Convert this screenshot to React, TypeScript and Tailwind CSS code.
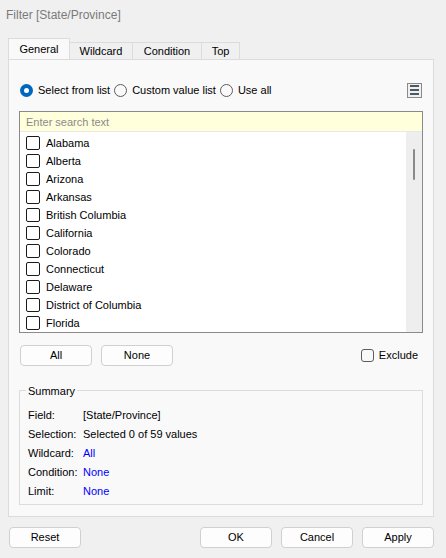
import React from "react"

const states = [
  "Alabama",
  "Alberta",
  "Arizona",
  "Arkansas",
  "British Columbia",
  "California",
  "Colorado",
  "Connecticut",
  "Delaware",
  "District of Columbia",
  "Florida",
]

function Radio({ checked, label }: { checked?: boolean; label: string }) {
  return (
    <label className="flex items-center gap-[5px]">
      {checked ? (
        <span className="w-[13px] h-[13px] rounded-full bg-[#0067c0] flex items-center justify-center">
          <span className="w-[5px] h-[5px] rounded-full bg-white" />
        </span>
      ) : (
        <span className="w-[13px] h-[13px] rounded-full border border-[#5d5d5d] bg-[#f9f9f9]" />
      )}
      <span>{label}</span>
    </label>
  )
}

function Btn({ children, className = "" }: { children: React.ReactNode; className?: string }) {
  return (
    <button
      className={
        "h-[21px] w-[72px] rounded-[4px] border border-[#d0d0d0] bg-[#fdfdfd] text-[11px] text-black leading-none " +
        className
      }
    >
      {children}
    </button>
  )
}

export default function App() {
  return (
    <div
      className="w-[446px] h-[558px] bg-[#f0f0f0] text-[11px] text-[#1a1a1a] flex flex-col"
      style={{ fontFamily: '"Segoe UI", "Liberation Sans", sans-serif' }}
    >
      <div className="h-[39px] pl-[6px] pt-[6px] text-[12px] text-[#7a7a7a]">Filter [State/Province]</div>

      {/* tabs */}
      <div className="flex items-end pl-[8px] h-[20px] relative z-10">
        <div className="h-[21px] w-[62px] bg-[#f9f9f9] border border-b-0 border-[#dcdcdc] flex items-center justify-center text-black">
          General
        </div>
        <div className="h-[17px] w-[63px] border border-l-0 border-b-0 border-[#dcdcdc] flex items-center justify-center text-black">
          Wildcard
        </div>
        <div className="h-[17px] w-[69px] border border-l-0 border-b-0 border-[#dcdcdc] flex items-center justify-center text-black">
          Condition
        </div>
        <div className="h-[17px] w-[38px] border border-l-0 border-b-0 border-[#dcdcdc] flex items-center justify-center text-black">
          Top
        </div>
      </div>

      {/* panel */}
      <div className="ml-[8px] w-[426px] h-[458px] border border-[#dcdcdc] bg-[#f9f9f9] px-[10px] pt-[22px] flex flex-col">
        <div className="flex items-center justify-between h-[16px]">
          <div className="flex items-center gap-[4px] pl-px text-black">
            <Radio checked label="Select from list" />
            <Radio label="Custom value list" />
            <Radio label="Use all" />
          </div>
          <div className="w-[15px] h-[15px] border border-[#8a8a8a] bg-[#f0f0f0] flex flex-col items-center justify-center gap-[2px] mr-[1px]">
            <span className="w-[9px] h-[2px] bg-[#4a5a64]" />
            <span className="w-[9px] h-[2px] bg-[#4a5a64]" />
            <span className="w-[9px] h-[2px] bg-[#4a5a64]" />
          </div>
        </div>

        {/* list box */}
        <div className="mt-[13px] h-[222px] border border-[#8a8a8a] bg-white flex flex-col">
          <div className="h-[20px] bg-[#ffffdc] border-b border-[#e8e8e8] pl-[6px] pt-px flex items-center text-[#8a8a8a]">
            Enter search text
          </div>
          <div className="flex flex-1 min-h-0">
            <div className="flex-1 pt-[2px] overflow-hidden">
              {states.map((s) => (
                <div key={s} className="h-[18px] flex items-center pl-[6px] gap-[6px] text-black">
                  <span className="w-[14px] h-[14px] border border-[#1a1a1a] rounded-[2px] bg-white" />
                  <span>{s}</span>
                </div>
              ))}
            </div>
            <div className="w-[16px] bg-[#eeeeee] flex justify-center pt-[17px]">
              <span className="w-[2px] h-[31px] bg-[#8a8a8a] rounded-full" />
            </div>
          </div>
        </div>

        <div className="mt-[12px] flex items-center">
          <Btn className="ml-px">All</Btn>
          <Btn className="ml-[9px]">None</Btn>
          <label className="ml-auto mr-[5px] flex items-center gap-[5px] text-black">
            <span className="w-[13px] h-[13px] border border-[#5d5d5d] rounded-[3px] bg-[#f9f9f9]" />
            Exclude
          </label>
        </div>

        {/* summary */}
        <div className="mt-[24px] h-[115px] border border-[#dcdcdc] relative pt-[16px] pl-[8px]">
          <span className="absolute -top-[8px] left-[6px] px-[2px] bg-[#f9f9f9] text-black">Summary</span>
          <div className="grid grid-cols-[55px_1fr] gap-y-[2px] text-black">
            <div className="h-[17px] flex items-center">Field:</div>
            <div className="h-[17px] flex items-center">[State/Province]</div>
            <div className="h-[17px] flex items-center">Selection:</div>
            <div className="h-[17px] flex items-center">Selected 0 of 59 values</div>
            <div className="h-[17px] flex items-center">Wildcard:</div>
            <div className="h-[17px] flex items-center text-[#0000ff]">All</div>
            <div className="h-[17px] flex items-center">Condition:</div>
            <div className="h-[17px] flex items-center text-[#0000ff]">None</div>
            <div className="h-[17px] flex items-center">Limit:</div>
            <div className="h-[17px] flex items-center text-[#0000ff]">None</div>
          </div>
        </div>
      </div>

      {/* footer buttons */}
      <div className="mt-[10px] pl-[9px] pr-[12px] flex items-center">
        <Btn>Reset</Btn>
        <div className="ml-auto flex gap-[9px]">
          <Btn>OK</Btn>
          <Btn>Cancel</Btn>
          <Btn>Apply</Btn>
        </div>
      </div>
    </div>
  )
}
